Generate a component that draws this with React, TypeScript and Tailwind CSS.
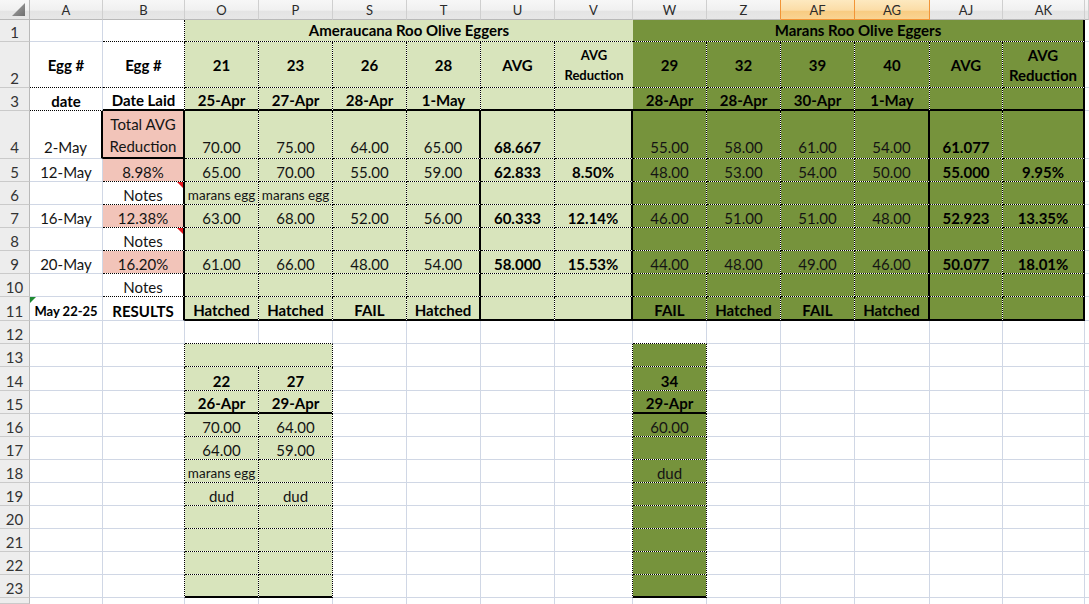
import React from 'react';

type Bd = 'g' | 'd' | 'T' | 'n';
type Bg = 'w' | 'lg' | 'dg' | 'pk';
type F = 'n' | 'b' | 's' | 'sb' | 'h2' | 'v2' | 'p2';

interface Cell {
  t?: string | string[];
  r: Bd;
  b: Bd;
  bg: Bg;
  f?: F;
  span?: 2 | 6;
  mid?: boolean;
  lift?: boolean;
  mark?: 'red' | 'green';
}

const R: Record<Bd, string> = {
  g: 'border-r border-r-[#d0d7e5]',
  d: 'border-r border-r-black [border-right-style:dotted]',
  T: 'border-r-2 border-r-black',
  n: '',
};
const B: Record<Bd, string> = {
  g: 'border-b border-b-[#d0d7e5]',
  d: 'border-b border-b-black [border-bottom-style:dotted]',
  T: 'border-b-2 border-b-black',
  n: '',
};
const BG: Record<Bg, string> = {
  w: 'bg-white',
  lg: '[background:linear-gradient(#d8e4bc,#d8e4bc)_padding-box,#ffffff]',
  dg: '[background:linear-gradient(#76933c,#76933c)_padding-box,#ffffff]',
  pk: '[background:linear-gradient(#f2c4b9,#f2c4b9)_padding-box,#ffffff]',
};
const FONT: Record<F, string> = {
  n: 'text-[15px] leading-[18px] text-[#141414]',
  b: 'text-[15px] leading-[18px] font-bold text-black',
  s: 'text-[13.5px] leading-[18px] text-[#141414]',
  sb: 'text-[13px] leading-[18px] font-bold text-black',
  h2: 'text-[15px] leading-[20px] font-bold text-black',
  v2: 'text-[13px] leading-[20px] font-bold text-black',
  p2: 'text-[15px] leading-[22px] text-[#141414]',
};
const SPAN: Record<number, string> = { 2: 'col-span-2', 6: 'col-span-6' };

const w = (r: Bd = 'g', b: Bd = 'g', t?: string): Cell => ({ r, b, bg: 'w', t });
const X = (b: Bd = 'g'): Cell => ({ r: 'n', b, bg: 'w' });

const row1: Cell[] = [
  w('g', 'g'),
  w('d', 'd'),
  { t: 'Ameraucana Roo Olive Eggers', f: 'b', r: 'n', b: 'd', bg: 'lg', span: 6, lift: true },
  { t: 'Marans Roo Olive Eggers', f: 'b', r: 'T', b: 'd', bg: 'dg', span: 6, lift: true },
  X(),
];

const row2: Cell[] = [
  { t: 'Egg #', f: 'b', mid: true, r: 'g', b: 'd', bg: 'w' },
  { t: 'Egg #', f: 'b', mid: true, r: 'd', b: 'd', bg: 'w' },
  { t: '21', f: 'b', mid: true, r: 'd', b: 'd', bg: 'lg' },
  { t: '23', f: 'b', mid: true, r: 'd', b: 'd', bg: 'lg' },
  { t: '26', f: 'b', mid: true, r: 'd', b: 'd', bg: 'lg' },
  { t: '28', f: 'b', mid: true, r: 'd', b: 'd', bg: 'lg' },
  { t: 'AVG', f: 'b', mid: true, r: 'd', b: 'd', bg: 'lg' },
  { t: ['AVG', 'Reduction'], f: 'v2', mid: true, r: 'n', b: 'd', bg: 'lg' },
  { t: '29', f: 'b', mid: true, r: 'd', b: 'd', bg: 'dg' },
  { t: '32', f: 'b', mid: true, r: 'd', b: 'd', bg: 'dg' },
  { t: '39', f: 'b', mid: true, r: 'd', b: 'd', bg: 'dg' },
  { t: '40', f: 'b', mid: true, r: 'd', b: 'd', bg: 'dg' },
  { t: 'AVG', f: 'b', mid: true, r: 'd', b: 'd', bg: 'dg' },
  { t: ['AVG', 'Reduction'], f: 'h2', mid: true, r: 'T', b: 'd', bg: 'dg' },
  X(),
];

const row3: Cell[] = [
  { t: 'date', f: 'b', r: 'g', b: 'd', bg: 'w' },
  { t: 'Date Laid', f: 'b', r: 'd', b: 'T', bg: 'w' },
  { t: '25-Apr', f: 'b', r: 'd', b: 'T', bg: 'lg' },
  { t: '27-Apr', f: 'b', r: 'd', b: 'T', bg: 'lg' },
  { t: '28-Apr', f: 'b', r: 'd', b: 'T', bg: 'lg' },
  { t: '1-May', f: 'b', r: 'd', b: 'T', bg: 'lg' },
  { r: 'd', b: 'T', bg: 'lg' },
  { r: 'n', b: 'T', bg: 'lg' },
  { t: '28-Apr', f: 'b', r: 'd', b: 'T', bg: 'dg' },
  { t: '28-Apr', f: 'b', r: 'd', b: 'T', bg: 'dg' },
  { t: '30-Apr', f: 'b', r: 'd', b: 'T', bg: 'dg' },
  { t: '1-May', f: 'b', r: 'd', b: 'T', bg: 'dg' },
  { r: 'd', b: 'T', bg: 'dg' },
  { r: 'T', b: 'T', bg: 'dg' },
  X(),
];

const RIGHTS: Bd[] = ['d', 'd', 'd', 'T', 'd', 'T', 'd', 'd', 'd', 'T', 'd', 'T'];
const BOLDIDX = [4, 5, 10, 11];

function dataRow(a: Cell, bc: Cell, vals: string[], last: boolean, lift = false): Cell[] {
  const cells: Cell[] = [a, bc];
  vals.forEach((v, i) => {
    let f: F = last || BOLDIDX.includes(i) ? 'b' : 'n';
    if (v === 'marans egg') f = 's';
    cells.push({ t: v, f, r: RIGHTS[i], b: last ? 'T' : 'd', bg: i < 6 ? 'lg' : 'dg', lift });
  });
  cells.push(X());
  return cells;
}

const E12 = ['', '', '', '', '', '', '', '', '', '', '', ''];

const rows4to11: Cell[][] = [
  dataRow(
    { t: '2-May', f: 'n', r: 'T', b: 'g', bg: 'w', lift: true },
    { t: ['Total AVG', 'Reduction'], f: 'p2', r: 'T', b: 'T', bg: 'pk' },
    ['70.00', '75.00', '64.00', '65.00', '68.667', '', '55.00', '58.00', '61.00', '54.00', '61.077', ''],
    false,
    true,
  ),
  dataRow(
    { t: '12-May', f: 'n', r: 'g', b: 'g', bg: 'w' },
    { t: '8.98%', f: 'n', r: 'T', b: 'd', bg: 'pk' },
    ['65.00', '70.00', '55.00', '59.00', '62.833', '8.50%', '48.00', '53.00', '54.00', '50.00', '55.000', '9.95%'],
    false,
  ),
  dataRow(
    { r: 'g', b: 'g', bg: 'w' },
    { t: 'Notes', f: 'n', r: 'T', b: 'd', bg: 'w', mark: 'red' },
    ['marans egg', 'marans egg', '', '', '', '', '', '', '', '', '', ''],
    false,
  ),
  dataRow(
    { t: '16-May', f: 'n', r: 'g', b: 'g', bg: 'w' },
    { t: '12.38%', f: 'n', r: 'T', b: 'd', bg: 'pk' },
    ['63.00', '68.00', '52.00', '56.00', '60.333', '12.14%', '46.00', '51.00', '51.00', '48.00', '52.923', '13.35%'],
    false,
  ),
  dataRow(
    { r: 'g', b: 'g', bg: 'w' },
    { t: 'Notes', f: 'n', r: 'T', b: 'd', bg: 'w', mark: 'red' },
    E12,
    false,
  ),
  dataRow(
    { t: '20-May', f: 'n', r: 'g', b: 'g', bg: 'w' },
    { t: '16.20%', f: 'n', r: 'T', b: 'd', bg: 'pk' },
    ['61.00', '66.00', '48.00', '54.00', '58.000', '15.53%', '44.00', '48.00', '49.00', '46.00', '50.077', '18.01%'],
    false,
  ),
  dataRow(
    { r: 'g', b: 'g', bg: 'w' },
    { t: 'Notes', f: 'n', r: 'T', b: 'd', bg: 'w' },
    E12,
    false,
  ),
  dataRow(
    { t: 'May 22-25', f: 'sb', r: 'g', b: 'g', bg: 'w', mark: 'green' },
    { t: 'RESULTS', f: 'b', r: 'T', b: 'g', bg: 'w' },
    ['Hatched', 'Hatched', 'FAIL', 'Hatched', '', '', 'FAIL', 'Hatched', 'FAIL', 'Hatched', '', ''],
    true,
  ),
];

type Lower = { o?: [string, F]; p?: [string, F]; wv?: [string, F] };
const LOWER: Record<number, Lower> = {
  14: { o: ['22', 'b'], p: ['27', 'b'], wv: ['34', 'b'] },
  15: { o: ['26-Apr', 'b'], p: ['29-Apr', 'b'], wv: ['29-Apr', 'b'] },
  16: { o: ['70.00', 'n'], p: ['64.00', 'n'], wv: ['60.00', 'n'] },
  17: { o: ['64.00', 'n'], p: ['59.00', 'n'] },
  18: { o: ['marans egg', 's'], wv: ['dud', 'n'] },
  19: { o: ['dud', 'n'], p: ['dud', 'n'] },
};

function lowerRow(r: number): Cell[] {
  const cells: Cell[] = [];
  cells.push(w('g', 'g'));
  cells.push(w(r >= 13 ? 'd' : 'g', 'g'));
  const bot: Bd = r === 15 || r === 23 ? 'T' : 'd';
  const L = LOWER[r] || {};
  if (r === 12) {
    cells.push(w('g', 'd'));
    cells.push(w('g', 'd'));
  } else if (r === 13) {
    cells.push({ r: 'd', b: 'd', bg: 'lg', span: 2 });
  } else {
    cells.push({ t: L.o?.[0], f: L.o?.[1], r: 'd', b: bot, bg: 'lg' });
    cells.push({ t: L.p?.[0], f: L.p?.[1], r: 'd', b: bot, bg: 'lg' });
  }
  cells.push(w('g', 'g'));
  cells.push(w('g', 'g'));
  cells.push(w('g', 'g'));
  cells.push(w(r >= 13 ? 'd' : 'g', 'g'));
  if (r === 12) {
    cells.push(w('g', 'd'));
  } else {
    cells.push({ t: L.wv?.[0], f: L.wv?.[1], r: 'd', b: r === 13 ? 'd' : bot, bg: 'dg' });
  }
  for (let i = 0; i < 5; i++) cells.push(w('g', 'g'));
  cells.push(X());
  return cells;
}

const lowerRows: Cell[][] = [];
for (let r = 12; r <= 23; r++) lowerRows.push(lowerRow(r));

const row24: Cell[] = [];
for (let i = 0; i < 14; i++) row24.push(w('g', 'n'));
row24.push(X('n'));

const ALL: Cell[][] = [row1, row2, row3, ...rows4to11, ...lowerRows, row24];

function CellView({ c }: { c: Cell }) {
  const f = c.f || 'n';
  const lines = c.t === undefined ? [] : Array.isArray(c.t) ? c.t : [c.t];
  return (
    <div
      className={`relative flex justify-center overflow-visible whitespace-nowrap text-center ${
        c.mid ? 'items-center' : 'items-end'
      } ${c.lift ? 'pb-[2px]' : ''} ${R[c.r]} ${B[c.b]} ${BG[c.bg]} ${FONT[f]} ${c.span ? SPAN[c.span] : ''}`}
    >
      {lines.length > 1 ? (
        <div>
          {lines.map((l, i) => (
            <div key={i}>{l}</div>
          ))}
        </div>
      ) : lines.length === 1 ? (
        <span>{lines[0]}</span>
      ) : null}
      {c.mark === 'red' && (
        <svg className="absolute right-0 top-0" width="6" height="6" viewBox="0 0 6 6">
          <polygon points="0,0 6,0 6,6" fill="#e3141b" />
        </svg>
      )}
      {c.mark === 'green' && (
        <svg className="absolute left-0 top-0" width="6" height="6" viewBox="0 0 6 6">
          <polygon points="0,0 6,0 0,6" fill="#1f8a32" />
        </svg>
      )}
    </div>
  );
}

const HEADERS = ['A', 'B', 'O', 'P', 'S', 'T', 'U', 'V', 'W', 'Z', 'AF', 'AG', 'AJ', 'AK', ''];

const HDR_NORMAL =
  'flex items-center justify-center text-[13px] leading-[16px] text-[#2b2b2b] border-r border-r-[#cfcfcf] border-b border-b-[#b9b9b9] bg-[linear-gradient(#f7f7f7,#f0f0f0_55%,#e4e4e4_56%,#e7e7e7)]';
const HDR_BEFORE_SEL =
  'flex items-center justify-center text-[13px] leading-[16px] text-[#2b2b2b] border-r border-r-[#f29436] border-b border-b-[#b9b9b9] bg-[linear-gradient(#f7f7f7,#f0f0f0_55%,#e4e4e4_56%,#e7e7e7)]';
const HDR_SEL =
  'flex items-center justify-center text-[13px] leading-[16px] text-[#2b2b2b] border-r border-r-[#f29436] border-b border-b-[#f29436] bg-[linear-gradient(#fde9c0,#fbdca6_55%,#f8cb80_56%,#f9d493)]';

const ROWHDR =
  'flex items-end justify-center overflow-hidden bg-[#ededed] border-r border-r-[#b9b9b9] border-b border-b-[#cacaca] text-[15px] leading-[18px] text-[#333333]';
const ROWHDR_LIFT =
  'flex items-end justify-center overflow-hidden pb-[2px] bg-[#ededed] border-r border-r-[#b9b9b9] border-b border-b-[#cacaca] text-[15px] leading-[18px] text-[#333333]';

export default function App() {
  return (
    <div className="w-[1089px] h-[604px] overflow-hidden bg-white font-['Lato',sans-serif]">
      <div className="grid grid-cols-[30px_73px_82px_74px_74px_74px_74px_74px_78px_74px_74px_74px_75px_73px_82px_4px] grid-rows-[20px_22px_46px_23px_48px_23px_23px_23px_23px_23px_23px_24px_23px_23px_24px_23px_23px_23px_23px_23px_23px_23px_23px_23px_6px]">
        <div className="relative border-r border-r-[#b9b9b9] border-b border-b-[#b9b9b9] bg-[linear-gradient(#f7f7f7,#f0f0f0_55%,#e4e4e4_56%,#e7e7e7)]">
          <svg className="absolute left-0 top-0" width="29" height="19" viewBox="0 0 29 19">
            <defs>
              <linearGradient id="tri" x1="0" y1="0" x2="1" y2="1">
                <stop offset="0" stopColor="#a8a8a8" />
                <stop offset="1" stopColor="#6e6e6e" />
              </linearGradient>
            </defs>
            <polygon points="12,16 25,16 25,3" fill="url(#tri)" />
          </svg>
        </div>
        {HEADERS.map((h, i) => (
          <div
            key={'h' + i}
            className={h === 'AF' || h === 'AG' ? HDR_SEL : h === 'Z' ? HDR_BEFORE_SEL : HDR_NORMAL}
          >
            {h}
          </div>
        ))}
        {ALL.map((row, ri) => (
          <React.Fragment key={'r' + ri}>
            <div className={ri === 3 ? ROWHDR_LIFT : ROWHDR}>{ri < 23 ? ri + 1 : ''}</div>
            {row.map((c, ci) => (
              <CellView key={ci} c={c} />
            ))}
          </React.Fragment>
        ))}
      </div>
    </div>
  );
}
